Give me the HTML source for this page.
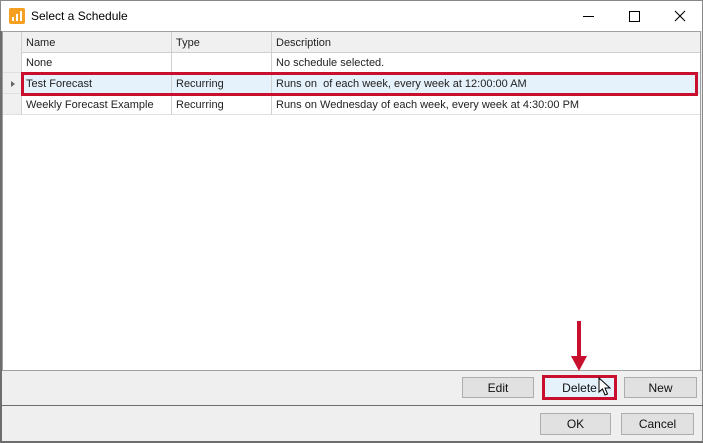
<!DOCTYPE html>
<html><head><style>
*{margin:0;padding:0;box-sizing:border-box}
body{width:703px;height:443px;background:#efefef;font-family:"Liberation Sans",sans-serif;font-size:11px;color:#222;position:relative;overflow:hidden}
.a{position:absolute}
.title{left:0;top:0;width:703px;height:31px;background:#fff;border:1px solid #888;border-bottom:none}
.grid{left:2px;top:31px;width:699px;height:340px;background:#fff;border:1px solid #a0a0a0;border-top:1px solid #a0a0a0}
.hdr{top:0;height:20px;background:#f0f0f0;border-bottom:1px solid #d0d0d0}
.cell{position:absolute;height:21px;line-height:21px;padding-top:1px;padding-left:4px;border-right:1px solid #d0d0d0;border-bottom:1px solid #e0e0e0;white-space:nowrap;font-size:11px}
.btn{position:absolute;background:#e1e1e1;border:1px solid #adadad;text-align:center;line-height:21px;font-size:12px;color:#111}
</style></head><body>
<div class="a" style="left:0;top:0;width:2px;height:443px;background:#6d6d6d"></div>
<div class="a" style="right:0;top:0;width:1px;height:443px;background:#888"></div>
<div class="a" style="left:0;bottom:0;width:703px;height:2px;background:#6d6d6d"></div>
<div class="a title">
 <div class="a" style="left:8px;top:7px;width:16px;height:16px;background:#f5a020;border-radius:2px">
  <div class="a" style="left:3px;top:9px;width:2px;height:4px;background:#fff"></div>
  <div class="a" style="left:7px;top:6px;width:2px;height:7px;background:#fff"></div>
  <div class="a" style="left:11px;top:3px;width:2px;height:10px;background:#fff"></div>
 </div>
 <div class="a" style="left:30px;top:8px;font-size:12px;color:#000">Select a Schedule</div>
 <div class="a" style="left:582px;top:15px;width:11px;height:1px;background:#000"></div>
 <div class="a" style="left:628px;top:10px;width:11px;height:11px;border:1px solid #000"></div>
 <svg class="a" style="left:673px;top:9px" width="12" height="12"><path d="M1 1L11 11M11 1L1 11" stroke="#000" stroke-width="1.1"/></svg>
</div>
<div class="a grid">
 <div class="a hdr" style="left:0;width:697px"></div>
 <div class="cell" style="left:0;top:0;width:19px;background:#f0f0f0"></div>
 <div class="cell" style="left:19px;top:0;width:150px;background:#f0f0f0;border-bottom:1px solid #d0d0d0">Name</div>
 <div class="cell" style="left:169px;top:0;width:100px;background:#f0f0f0;border-bottom:1px solid #d0d0d0">Type</div>
 <div class="cell" style="left:269px;top:0;width:428px;background:#f0f0f0;border-bottom:1px solid #d0d0d0;border-right:none">Description</div>

 <div class="cell" style="left:0;top:20px;width:19px;background:#f0f0f0"></div>
 <div class="cell" style="left:19px;top:20px;width:150px">None</div>
 <div class="cell" style="left:169px;top:20px;width:100px"></div>
 <div class="cell" style="left:269px;top:20px;width:428px;border-right:none">No schedule selected.</div>

 <div class="cell" style="left:0;top:41px;width:19px;background:#f0f0f0"><div class="a" style="left:8px;top:8px;border-left:4px solid #666;border-top:3.5px solid transparent;border-bottom:3.5px solid transparent"></div></div>
 <div class="cell" style="left:19px;top:41px;width:150px;background:#e5f1fb">Test Forecast</div>
 <div class="cell" style="left:169px;top:41px;width:100px;background:#e5f1fb">Recurring</div>
 <div class="cell" style="left:269px;top:41px;width:428px;background:#e5f1fb;border-right:none">Runs on &nbsp;of each week, every week at 12:00:00 AM</div>

 <div class="cell" style="left:0;top:62px;width:19px;background:#f0f0f0"></div>
 <div class="cell" style="left:19px;top:62px;width:150px">Weekly Forecast Example</div>
 <div class="cell" style="left:169px;top:62px;width:100px">Recurring</div>
 <div class="cell" style="left:269px;top:62px;width:428px;border-right:none">Runs on Wednesday of each week, every week at 4:30:00 PM</div>
</div>
<div class="a" style="left:21px;top:72px;width:677px;height:24px;border:3px solid #c8102e"></div>
<div class="a" style="left:2px;top:370px;width:700px;height:1px;background:#a0a0a0"></div>
<div class="a" style="left:0;top:405px;width:703px;height:1px;background:#6d6d6d"></div>
<div class="btn" style="left:462px;top:377px;width:72px;height:21px;line-height:20px">Edit</div>
<div class="btn" style="left:542px;top:375px;width:75px;height:25px;background:#e5f1fb;border:3px solid #c8102e;line-height:20px">Delete</div>
<div class="btn" style="left:624px;top:377px;width:73px;height:21px;line-height:20px">New</div>
<div class="btn" style="left:540px;top:413px;width:71px;height:22px">OK</div>
<div class="btn" style="left:621px;top:413px;width:73px;height:22px">Cancel</div>
<div class="a" style="left:577px;top:321px;width:4px;height:38px;background:#c8102e"></div>
<svg class="a" style="left:571px;top:356px" width="16" height="15"><path d="M0 0H16L8 15Z" fill="#c8102e"/></svg>
<svg class="a" style="left:598px;top:377px" width="13" height="20"><path d="M1 1V15L4.5 12L7 18L9.5 17L7 11H12Z" fill="#fff" stroke="#000" stroke-width="1"/></svg>
</body></html>
